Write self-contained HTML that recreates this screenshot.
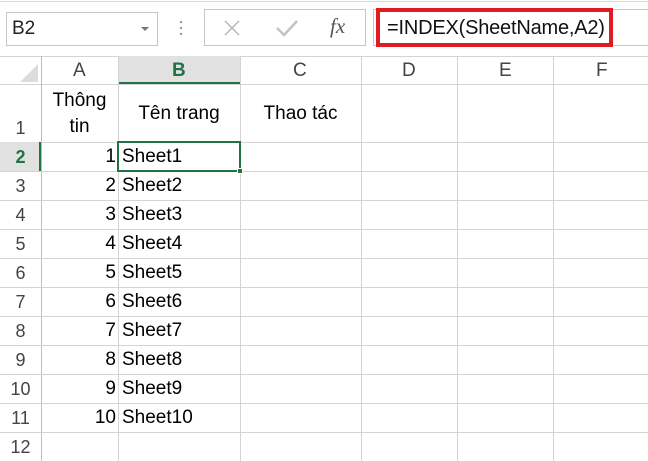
<!DOCTYPE html>
<html><head><meta charset="utf-8"><style>
*{margin:0;padding:0;box-sizing:border-box}
body{width:648px;height:461px;overflow:hidden;background:#fff;font-family:"Liberation Sans",sans-serif;position:relative;color:#000}
.a{position:absolute}
.t{font-size:19px;white-space:nowrap;line-height:22px}
.hl{position:absolute;left:0;width:648px;height:1px;background:#d4d4d4}
.vl{position:absolute;top:56px;width:1px;height:405px;background:#d4d4d4}
.rn{position:absolute;left:0;width:41px;text-align:center;color:#444;font-size:18px;line-height:22px}
.num{position:absolute;left:41px;width:75px;text-align:right;font-size:19px;line-height:22px}
.sh{position:absolute;left:122px;font-size:19px;line-height:22px}
</style></head><body>
<div class="a" style="left:0;top:1px;width:648px;height:1px;background:#d8d8d8"></div>
<div class="a" style="left:6px;top:12px;width:152px;height:34px;border:1px solid #c6c6c6"></div>
<div class="a t" style="left:12px;top:18px;color:#222">B2</div>
<div class="a" style="left:141px;top:27px;width:0;height:0;border-left:4px solid transparent;border-right:4px solid transparent;border-top:4px solid #777"></div>
<div class="a" style="left:180px;top:21px;width:2px;height:2px;background:#999;box-shadow:0 6px 0 #999,0 12px 0 #999"></div>
<div class="a" style="left:204px;top:9px;width:162px;height:37px;border:1px solid #c6c6c6"></div>
<svg class="a" style="left:222px;top:18px" width="20" height="20"><path d="M3 3L17 17M17 3L3 17" stroke="#b5b5b5" stroke-width="1.5"/></svg>
<svg class="a" style="left:275px;top:18px" width="24" height="20"><path d="M2 10L9 17L22 3" stroke="#c3c3c3" stroke-width="2.5" fill="none"/></svg>
<div class="a" style="left:330px;top:14px;font-family:'Liberation Serif',serif;font-style:italic;font-size:21px;color:#555">fx</div>
<div class="a" style="left:373px;top:9px;width:290px;height:37px;border:1px solid #c6c6c6"></div>
<div class="a" style="left:376px;top:8px;width:237px;height:39px;border:4px solid #e11b22"></div>
<div class="a t" style="left:387px;top:17px;font-size:20px;color:#111;letter-spacing:-0.2px">=INDEX(SheetName,A2)</div>
<div class="a" style="left:0;top:56px;width:648px;height:28px;background:#fff;border-top:1px solid #d4d4d4"></div>
<div class="a" style="left:118px;top:56px;width:122px;height:28px;background:#e1e1e1;border-bottom:2px solid #217346"></div>
<svg class="a" style="left:14px;top:60px" width="26" height="24"><path d="M24 4L24 22L6 22Z" fill="#dcdcdc"/></svg>
<div class="hl" style="top:84px"></div>
<div class="a t" style="left:73px;top:60px;color:#444">A</div>
<div class="a t" style="left:172px;top:60px;color:#217346;font-weight:bold">B</div>
<div class="a t" style="left:293px;top:60px;color:#444">C</div>
<div class="a t" style="left:402px;top:60px;color:#444">D</div>
<div class="a t" style="left:499px;top:60px;color:#444">E</div>
<div class="a t" style="left:596px;top:60px;color:#444">F</div>
<div class="vl" style="left:41px;background:#bdbdbd"></div>
<div class="vl" style="left:118px"></div>
<div class="vl" style="left:240px"></div>
<div class="vl" style="left:361px"></div>
<div class="vl" style="left:457px"></div>
<div class="vl" style="left:553px"></div>
<div class="hl" style="top:142px"></div>
<div class="hl" style="top:171px"></div>
<div class="hl" style="top:200px"></div>
<div class="hl" style="top:229px"></div>
<div class="hl" style="top:258px"></div>
<div class="hl" style="top:287px"></div>
<div class="hl" style="top:316px"></div>
<div class="hl" style="top:345px"></div>
<div class="hl" style="top:374px"></div>
<div class="hl" style="top:403px"></div>
<div class="hl" style="top:432px"></div>
<div class="a" style="left:0;top:142px;width:41px;height:29px;background:#e1e1e1;border-right:2px solid #217346"></div>
<div class="rn" style="top:117px">1</div>
<div class="rn" style="top:146px;color:#217346;font-weight:bold">2</div>
<div class="rn" style="top:175px">3</div>
<div class="rn" style="top:204px">4</div>
<div class="rn" style="top:233px">5</div>
<div class="rn" style="top:262px">6</div>
<div class="rn" style="top:291px">7</div>
<div class="rn" style="top:320px">8</div>
<div class="rn" style="top:349px">9</div>
<div class="rn" style="top:378px">10</div>
<div class="rn" style="top:407px">11</div>
<div class="rn" style="top:436px">12</div>
<div class="a t" style="left:41px;top:88px;width:77px;text-align:center;line-height:26px">Thông<br>tin</div>
<div class="a t" style="left:118px;top:103px;width:122px;text-align:center">Tên trang</div>
<div class="a t" style="left:240px;top:103px;width:121px;text-align:center">Thao tác</div>
<div class="num" style="top:146px">1</div><div class="sh" style="top:146px">Sheet1</div>
<div class="num" style="top:175px">2</div><div class="sh" style="top:175px">Sheet2</div>
<div class="num" style="top:204px">3</div><div class="sh" style="top:204px">Sheet3</div>
<div class="num" style="top:233px">4</div><div class="sh" style="top:233px">Sheet4</div>
<div class="num" style="top:262px">5</div><div class="sh" style="top:262px">Sheet5</div>
<div class="num" style="top:291px">6</div><div class="sh" style="top:291px">Sheet6</div>
<div class="num" style="top:320px">7</div><div class="sh" style="top:320px">Sheet7</div>
<div class="num" style="top:349px">8</div><div class="sh" style="top:349px">Sheet8</div>
<div class="num" style="top:378px">9</div><div class="sh" style="top:378px">Sheet9</div>
<div class="num" style="top:407px">10</div><div class="sh" style="top:407px">Sheet10</div>
<div class="a" style="left:117px;top:141px;width:124px;height:31px;border:2px solid #217346"></div>
<div class="a" style="left:237px;top:168px;width:6px;height:6px;background:#217346;border:1px solid #fff"></div>
</body></html>
